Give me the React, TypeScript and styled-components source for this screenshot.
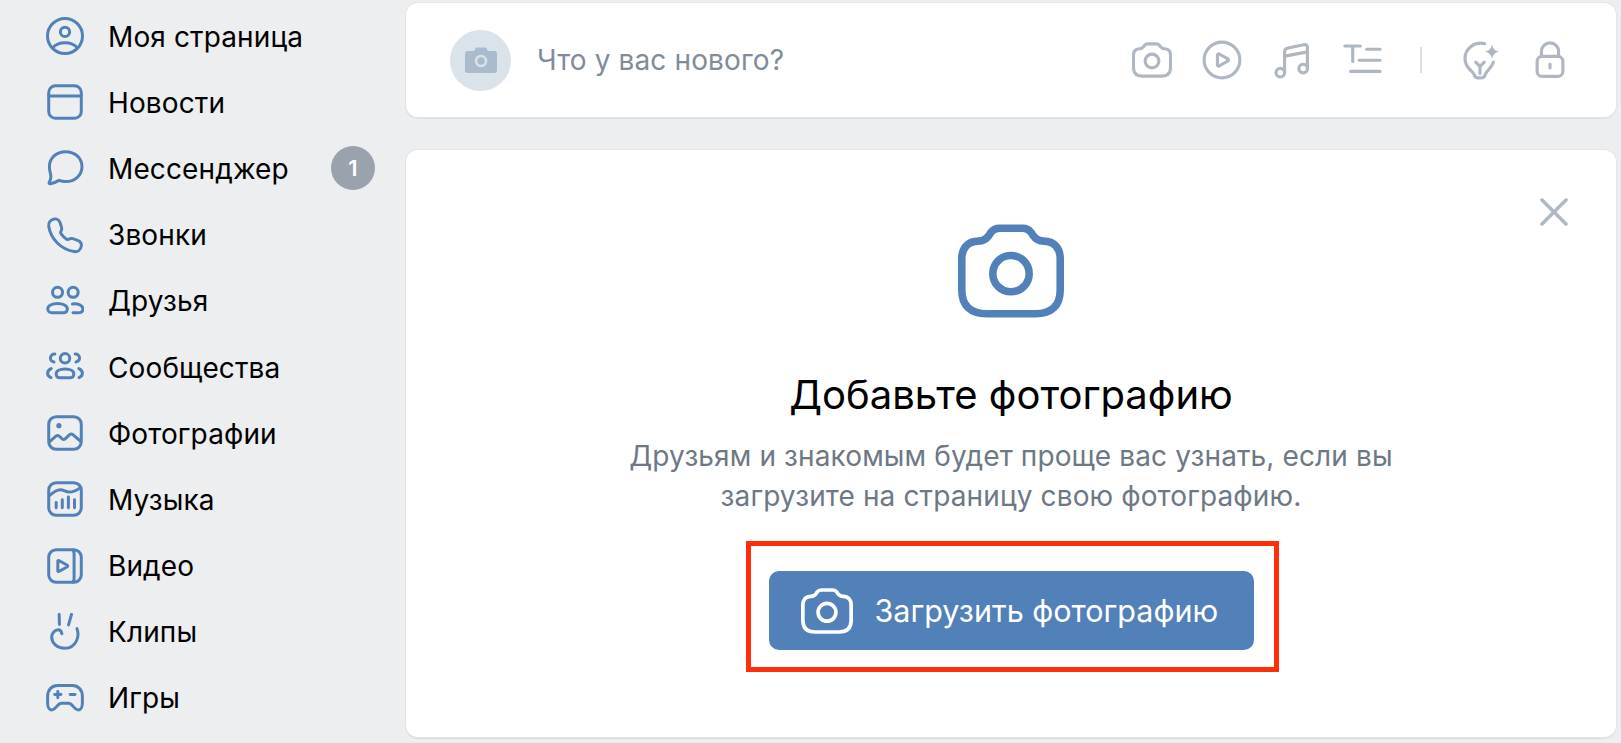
import React from 'react';
import styled, { createGlobalStyle } from 'styled-components';

const GlobalStyle = createGlobalStyle`
    html, body {
        margin: 0;
        height: 100%;
        overflow: hidden;
        background: #edeef0;
    }
    * {
        box-sizing: border-box;
    }
`;

const Page = styled.div`
    display: grid;
    grid-template-columns: 406px 1210px;
    height: 743px;
    font-family: Inter, "Noto Sans", sans-serif;
    color: #000;
`;

const Sidebar = styled.nav`
    display: flex;
    flex-direction: column;
    padding-top: 3px;
`;

const NavRow = styled.a`
    display: flex;
    align-items: center;
    height: 66.2px;
    padding: 0 31px 0 46px;
    font-size: 28px;
    letter-spacing: 0.12px;
`;

const NavLabel = styled.span`
    flex: 1;
    margin-left: 24px;
    padding-top: 1px;
`;

const Badge = styled.span`
    display: flex;
    align-items: center;
    justify-content: center;
    width: 44px;
    height: 44px;
    border-radius: 50%;
    background: #99a2ad;
    color: #fff;
    font-size: 22px;
    font-weight: 600;
`;

const Main = styled.main`
    display: flex;
    flex-direction: column;
    padding-top: 3px;
    gap: 33px;
`;

const Card = styled.section`
    background: #fff;
    border-radius: 12px;
    box-shadow: 0 0 0 1px #e3e5e8, 0 1px 0 1px #dce1e6;
`;

const Composer = styled(Card)`
    display: flex;
    align-items: center;
    height: 114px;
    padding: 0 46px 0 44px;
`;

const Avatar = styled.div`
    display: flex;
    align-items: center;
    justify-content: center;
    width: 61px;
    height: 61px;
    border-radius: 50%;
    background: #dae2ea;
`;

const Placeholder = styled.span`
    flex: 1;
    margin-left: 26px;
    font-size: 28px;
    letter-spacing: 0.12px;
    color: #818c99;
`;

const ToolGroup = styled.div`
    display: flex;
    align-items: center;
    gap: 30px;
`;

const ToolDivider = styled.span`
    width: 2px;
    height: 26px;
    margin: 0 38px;
    background: #dce1e6;
`;

const PromoCard = styled(Card)`
    position: relative;
    display: flex;
    flex-direction: column;
    align-items: center;
    height: 587px;
    padding-top: 68px;
`;

const CloseButton = styled.button`
    position: absolute;
    top: 48px;
    right: 48px;
    width: 28px;
    height: 28px;
    padding: 0;
    border: none;
    background: none;
    color: #aeb7c2;
`;

const Title = styled.h2`
    margin: 49px 0 0;
    font-size: 40px;
    line-height: 44px;
    font-weight: 400;
`;

const Subtitle = styled.p`
    margin: 19px 0 0;
    font-size: 28px;
    line-height: 40px;
    letter-spacing: 0.12px;
    text-align: center;
    color: #6d7885;
`;

const Highlight = styled.div`
    margin: 25px 0 0 2px;
    padding: 25px 20px 17px 18px;
    border: 5px solid #ff2d0a;
`;

const UploadButton = styled.button`
    display: flex;
    align-items: center;
    width: 485px;
    height: 79px;
    padding: 0 0 0 32px;
    border: none;
    border-radius: 10px;
    background: #5181b8;
    color: #fff;
    font-family: inherit;
    font-size: 30.5px;
    font-weight: 400;
    gap: 22px;
`;

type IconProps = { size?: number; color?: string; weight?: number };

const Svg = ({ size = 38, color = '#5181b8', weight = 2.2, children }: IconProps & { children: React.ReactNode }) => (
    <svg
        width={size}
        height={size}
        viewBox="0 0 28 28"
        fill="none"
        stroke={color}
        strokeWidth={weight}
        strokeLinecap="round"
        strokeLinejoin="round"
        style={{ flexShrink: 0 }}
    >
        {children}
    </svg>
);

const CameraIcon = (p: IconProps) => (
    <Svg {...p}>
        <path d="M10.9 2.700h6.200c.9 0 1.700.4 2.200 1.100l.6.9c.7 1 1.500 1.400 2.700 1.400 2.900 0 4.400 2 4.400 4.600v8.300c0 4.200-2.300 6.300-6.600 6.300H7.600C3.300 25.300 1 23.200 1 19v-8.300c0-2.600 1.500-4.600 4.400-4.600 1.200 0 2-.4 2.700-1.400l.6-.9c.5-.7 1.300-1.100 2.200-1.100z" />
        <circle cx="14" cy="14.700" r="4.800" />
    </Svg>
);

const UserIcon = () => (
    <Svg>
        <circle cx="14" cy="14" r="12.900" />
        <circle cx="14" cy="11" r="3.400" />
        <path d="M4.800 22.800C7 20.200 10.200 19 14 19s7 1.200 9.200 3.800" />
    </Svg>
);

const NewsIcon = () => (
    <Svg>
        <rect x="2" y="2" width="24" height="24" rx="5" />
        <path d="M2 9.500h24" />
    </Svg>
);

const MessageIcon = () => (
    <Svg>
        <path d="M14.500 2c6.800 0 12 4.700 12 11s-5.200 11-12 11c-1.800 0-3.400-.3-4.900-.9-1.500.9-3.700 2-6.300 2.500-.9.200-1.400-.6-.9-1.200.8-1 1.200-2.500 1.200-4.300C3.400 18 2.500 15.700 2.500 13c0-6.300 5.200-11 12-11z" />
    </Svg>
);

const PhoneIcon = () => (
    <Svg>
        <path d="M6 2.200C8 1.800 9.800 3 10.400 5l1.100 3.600c.3 1.200.1 2-.5 2.700-.4.500-.2 1.300.3 2 1 1.400 2.300 2.700 3.700 3.600.7.500 1.500.6 2 .2.700-.6 1.600-.8 2.800-.4l3.500 1.200c2 .7 3.100 2.400 2.700 4.400-.5 2.700-2.700 4.300-5.200 3.900C11.200 24.700 3.500 17 2 7.500 1.600 5 3.200 2.800 6 2.200z" />
    </Svg>
);

const FriendsIcon = () => (
    <Svg>
        <circle cx="8.500" cy="7.600" r="3.700" />
        <circle cx="20" cy="7.600" r="3.700" />
        <path d="M8.500 15.800c4.200 0 7.200 1.700 7.200 3.900 0 1.900-1.300 3-3.200 3h-8c-1.900 0-3.200-1.100-3.200-3 0-2.200 3-3.900 7.200-3.900z" />
        <path d="M19.500 16.200c4.200-.5 7.700 1 7.700 3.500 0 1.900-1.400 3-3.300 3h-4" />
    </Svg>
);

const GroupsIcon = () => (
    <Svg>
        <circle cx="14" cy="7.600" r="3.500" />
        <path d="M14 15.500c3.900 0 6.500 1.500 6.500 3.600 0 1.800-1.200 2.900-3 2.900h-7c-1.800 0-3-1.100-3-2.900 0-2.100 2.600-3.600 6.500-3.600z" />
        <path d="M6.500 4.500a2.900 2.900 0 0 0-.6 5.800" />
        <path d="M21.500 4.500a2.900 2.900 0 0 1 .6 5.800" />
        <path d="M3.800 15.200C2.200 15.900 1.200 17.200 1.200 18.600s.9 2.600 2.500 3.200" />
        <path d="M24.200 15.200c1.600.7 2.600 2 2.600 3.400s-.9 2.600-2.500 3.200" />
    </Svg>
);

const PhotosIcon = () => (
    <Svg>
        <rect x="2" y="2" width="24" height="24" rx="5.500" />
        <circle cx="9.500" cy="8.600" r="1.900" fill="#5181b8" stroke="none" />
        <path d="M2.500 20.500l4.800-4.200c.7-.6 1.700-.6 2.400 0l2.300 2c.6.500 1.500.5 2.100 0l3.300-3.100c.7-.6 1.700-.6 2.400 0l5.500 4.700" />
    </Svg>
);

const MusicIcon = () => (
    <Svg>
        <rect x="2" y="2" width="24" height="24" rx="5.500" />
        <path d="M2.500 11.500C5.500 9 7.800 7.200 10.500 7.200c2.600 0 4 1.700 6.400 1.700 3 0 5.600-1 8.600-3.500" />
        <path d="M7.500 16.500v4M12 14.500v6M16.500 12.500v8M21 14.500v6" />
    </Svg>
);

const VideoIcon = () => (
    <Svg>
        <rect x="2" y="2" width="24" height="24" rx="5.500" />
        <path d="M20 2.200c.4.800.7 1.900.7 3v17.600c0 1.100-.3 2.200-.7 3" />
        <path d="M8.700 10.400c0-.4.400-.7.800-.4l6.200 3.500c.4.200.4.800 0 1L9.500 18c-.4.300-.8 0-.8-.4z" />
    </Svg>
);

const ClipsIcon = () => (
    <Svg>
        <path d="M9.700 1l.2 7.500M18.800 1l-2.200 7.800" />
        <path d="M22.800 11.500c2.300 5.700-.8 14.500-8.800 14.500-6 0-9.800-4-9.800-8.300 0-3 2.300-5.300 4.800-5.300 1.400 0 2.400 1.100 2.700 2.900" />
    </Svg>
);

const GamesIcon = () => (
    <Svg>
        <path d="M8.500 4.800h11c4.300 0 7.300 3.200 7.300 8v5c0 2.700-1.100 5-3.200 5-1.500 0-2.300-1-3.200-2.200-1-1.300-2-2.800-3.800-2.800h-5.200c-1.800 0-2.800 1.500-3.800 2.800-.9 1.200-1.700 2.200-3.200 2.200-2.100 0-3.200-2.300-3.200-5v-5c0-4.800 3-8 7.300-8z" />
        <path d="M6.400 11.500h4.600M8.700 9.200v4.600M17.800 11.500h3.600" />
    </Svg>
);

const tool = { size: 40, color: '#aeb7c2' };

const PlayIcon = () => (
    <Svg {...tool}>
        <circle cx="14" cy="14" r="12.500" />
        <path d="M10.800 10.600c0-.7.700-1.100 1.300-.8l6 3.400c.6.300.6 1.200 0 1.500l-6 3.400c-.6.400-1.300-.1-1.300-.8z" />
    </Svg>
);

const NoteIcon = () => (
    <Svg {...tool}>
        <circle cx="5.800" cy="22.900" r="3" />
        <circle cx="21.800" cy="20" r="3" />
        <path d="M8.800 22.900V8.500c0-1.700.8-2.600 2.400-2.900l11-2.300c1.600-.3 2.600.4 2.600 2V20" />
        <path d="M9 11.300l15.800-3" />
    </Svg>
);

const TextIcon = () => (
    <Svg {...tool}>
        <path d="M2 4.200h10.800M7.500 4.200V15M17.300 6.500h9.300M12 14.200h14.600M6 22h20.600" />
    </Svg>
);

const BulbIcon = () => (
    <Svg {...tool}>
        <path d="M17.300 2.600C10 .8 3.500 6.200 3.500 13c0 3.400 1.500 6 3.700 8 1.200 1.100 2.400 2 2.800 3.500.4 1.400 1.200 2 2.500 2h2.600c1.300 0 2-.6 2.400-2 .5-1.700 1.600-2.700 2.800-4 1.300-1.400 2.500-3 3.100-5" />
        <path d="M11 15.500l3 3 3-3M14 18.500v5" />
        <path
            d="M22.400 3c.5 3 2 4.700 5 5.200-3 .5-4.500 2.200-5 5.200-.5-3-2-4.700-5-5.200 3-.5 4.500-2.200 5-5.200z"
            fill="#aeb7c2"
            stroke="none"
        />
    </Svg>
);

const LockIcon = () => (
    <Svg {...tool}>
        <rect x="5" y="11.500" width="18" height="14" rx="3.500" />
        <path d="M8 11.500V8a6 6 0 0 1 12 0v3.500M14 16.800v2.800" />
    </Svg>
);

const navItems = [
    { label: 'Моя страница', icon: <UserIcon /> },
    { label: 'Новости', icon: <NewsIcon /> },
    { label: 'Мессенджер', icon: <MessageIcon />, badge: 1 },
    { label: 'Звонки', icon: <PhoneIcon /> },
    { label: 'Друзья', icon: <FriendsIcon /> },
    { label: 'Сообщества', icon: <GroupsIcon /> },
    { label: 'Фотографии', icon: <PhotosIcon /> },
    { label: 'Музыка', icon: <MusicIcon /> },
    { label: 'Видео', icon: <VideoIcon /> },
    { label: 'Клипы', icon: <ClipsIcon /> },
    { label: 'Игры', icon: <GamesIcon /> },
];

export default function App() {
    return (
        <>
            <GlobalStyle />
            <Page>
                <Sidebar>
                    {navItems.map((item) => (
                        <NavRow key={item.label}>
                            {item.icon}
                            <NavLabel>{item.label}</NavLabel>
                            {item.badge && <Badge>{item.badge}</Badge>}
                        </NavRow>
                    ))}
                </Sidebar>
                <Main>
                    <Composer>
                        <Avatar>
                            <svg width="32" height="26" viewBox="0 0 32 26">
                                <path
                                    d="M3 4h6l2-3.500h10L23 4h6a3 3 0 0 1 3 3v16a3 3 0 0 1-3 3H3a3 3 0 0 1-3-3V7a3 3 0 0 1 3-3z"
                                    fill="#a9bbcd"
                                />
                                <circle cx="16" cy="14" r="5" fill="none" stroke="#dae2ea" strokeWidth="2.500" />
                            </svg>
                        </Avatar>
                        <Placeholder>Что у вас нового?</Placeholder>
                        <ToolGroup>
                            <CameraIcon {...tool} />
                            <PlayIcon />
                            <NoteIcon />
                            <TextIcon />
                        </ToolGroup>
                        <ToolDivider />
                        <ToolGroup>
                            <BulbIcon />
                            <LockIcon />
                        </ToolGroup>
                    </Composer>
                    <PromoCard>
                        <CloseButton aria-label="Закрыть">
                            <svg width="28" height="28" viewBox="0 0 28 28" stroke="currentColor" strokeWidth="3.500" strokeLinecap="round">
                                <path d="M2 2l24 24M26 2L2 26" />
                            </svg>
                        </CloseButton>
                        <CameraIcon size={106} weight={2} />
                        <Title>Добавьте фотографию</Title>
                        <Subtitle>
                            Друзьям и знакомым будет проще вас узнать, если вы
                            <br />
                            загрузите на страницу свою фотографию.
                        </Subtitle>
                        <Highlight>
                            <UploadButton>
                                <CameraIcon size={52} color="#fff" weight={2} />
                                Загрузить фотографию
                            </UploadButton>
                        </Highlight>
                    </PromoCard>
                </Main>
            </Page>
        </>
    );
}
